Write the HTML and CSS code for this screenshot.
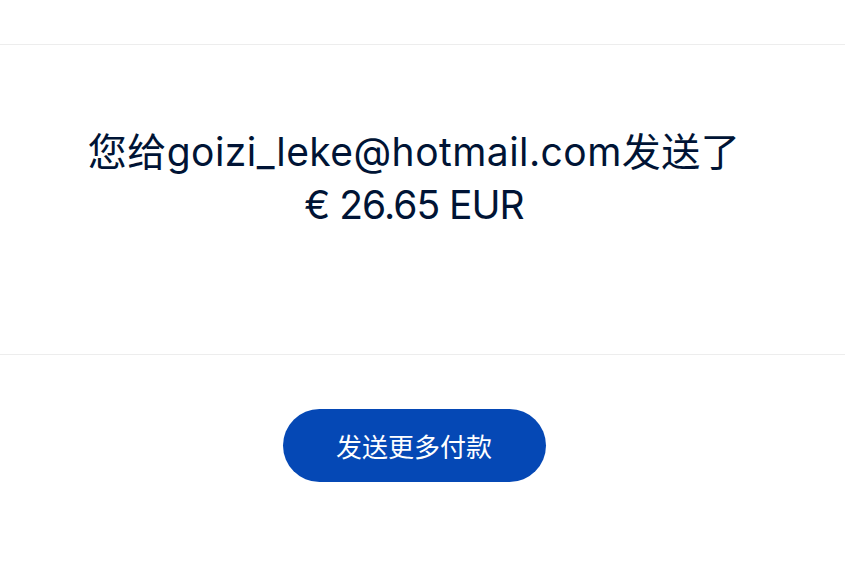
FILE: index.html
```html
<!DOCTYPE html>
<html lang="zh">
<head>
<meta charset="utf-8">
<link rel="stylesheet" href="styles.css">
</head>
<body>
<header class="top"></header>
<section class="summary">
  <h1 class="headline"><span class="recipient">您给goizi_leke@hotmail.com发送了</span><br><span class="amount">€ 26.65 EUR</span></h1>
</section>
<section class="actions">
  <button class="btn">发送更多付款</button>
</section>
</body>
</html>
```
FILE: styles.css
```css
html, body {
  margin: 0;
  padding: 0;
  background: #ffffff;
  font-family: "Inter", "Noto Sans CJK SC", sans-serif;
}
.top {
  height: 44px;
  border-bottom: 1px solid #ededed;
}
.summary {
  height: 310px;
  border-bottom: 1px solid #ededed;
  box-sizing: border-box;
  padding-top: 80px;
}
.headline {
  margin: 0;
  text-align: center;
  font-weight: 400;
  font-size: 39px;
  line-height: 53px;
  color: #001435;
  padding-right: 17px;
}
.recipient {
  letter-spacing: 0.45px;
}
.amount {
  letter-spacing: -1px;
}
.actions {
  display: flex;
  justify-content: center;
  padding-top: 54px;
  padding-right: 17px;
}
.btn {
  width: 263px;
  height: 73px;
  border: none;
  border-radius: 37px;
  background: #0548b5;
  color: #ffffff;
  font-family: "Inter", "Noto Sans CJK SC", sans-serif;
  font-size: 26px;
  padding: 0;
}
```
